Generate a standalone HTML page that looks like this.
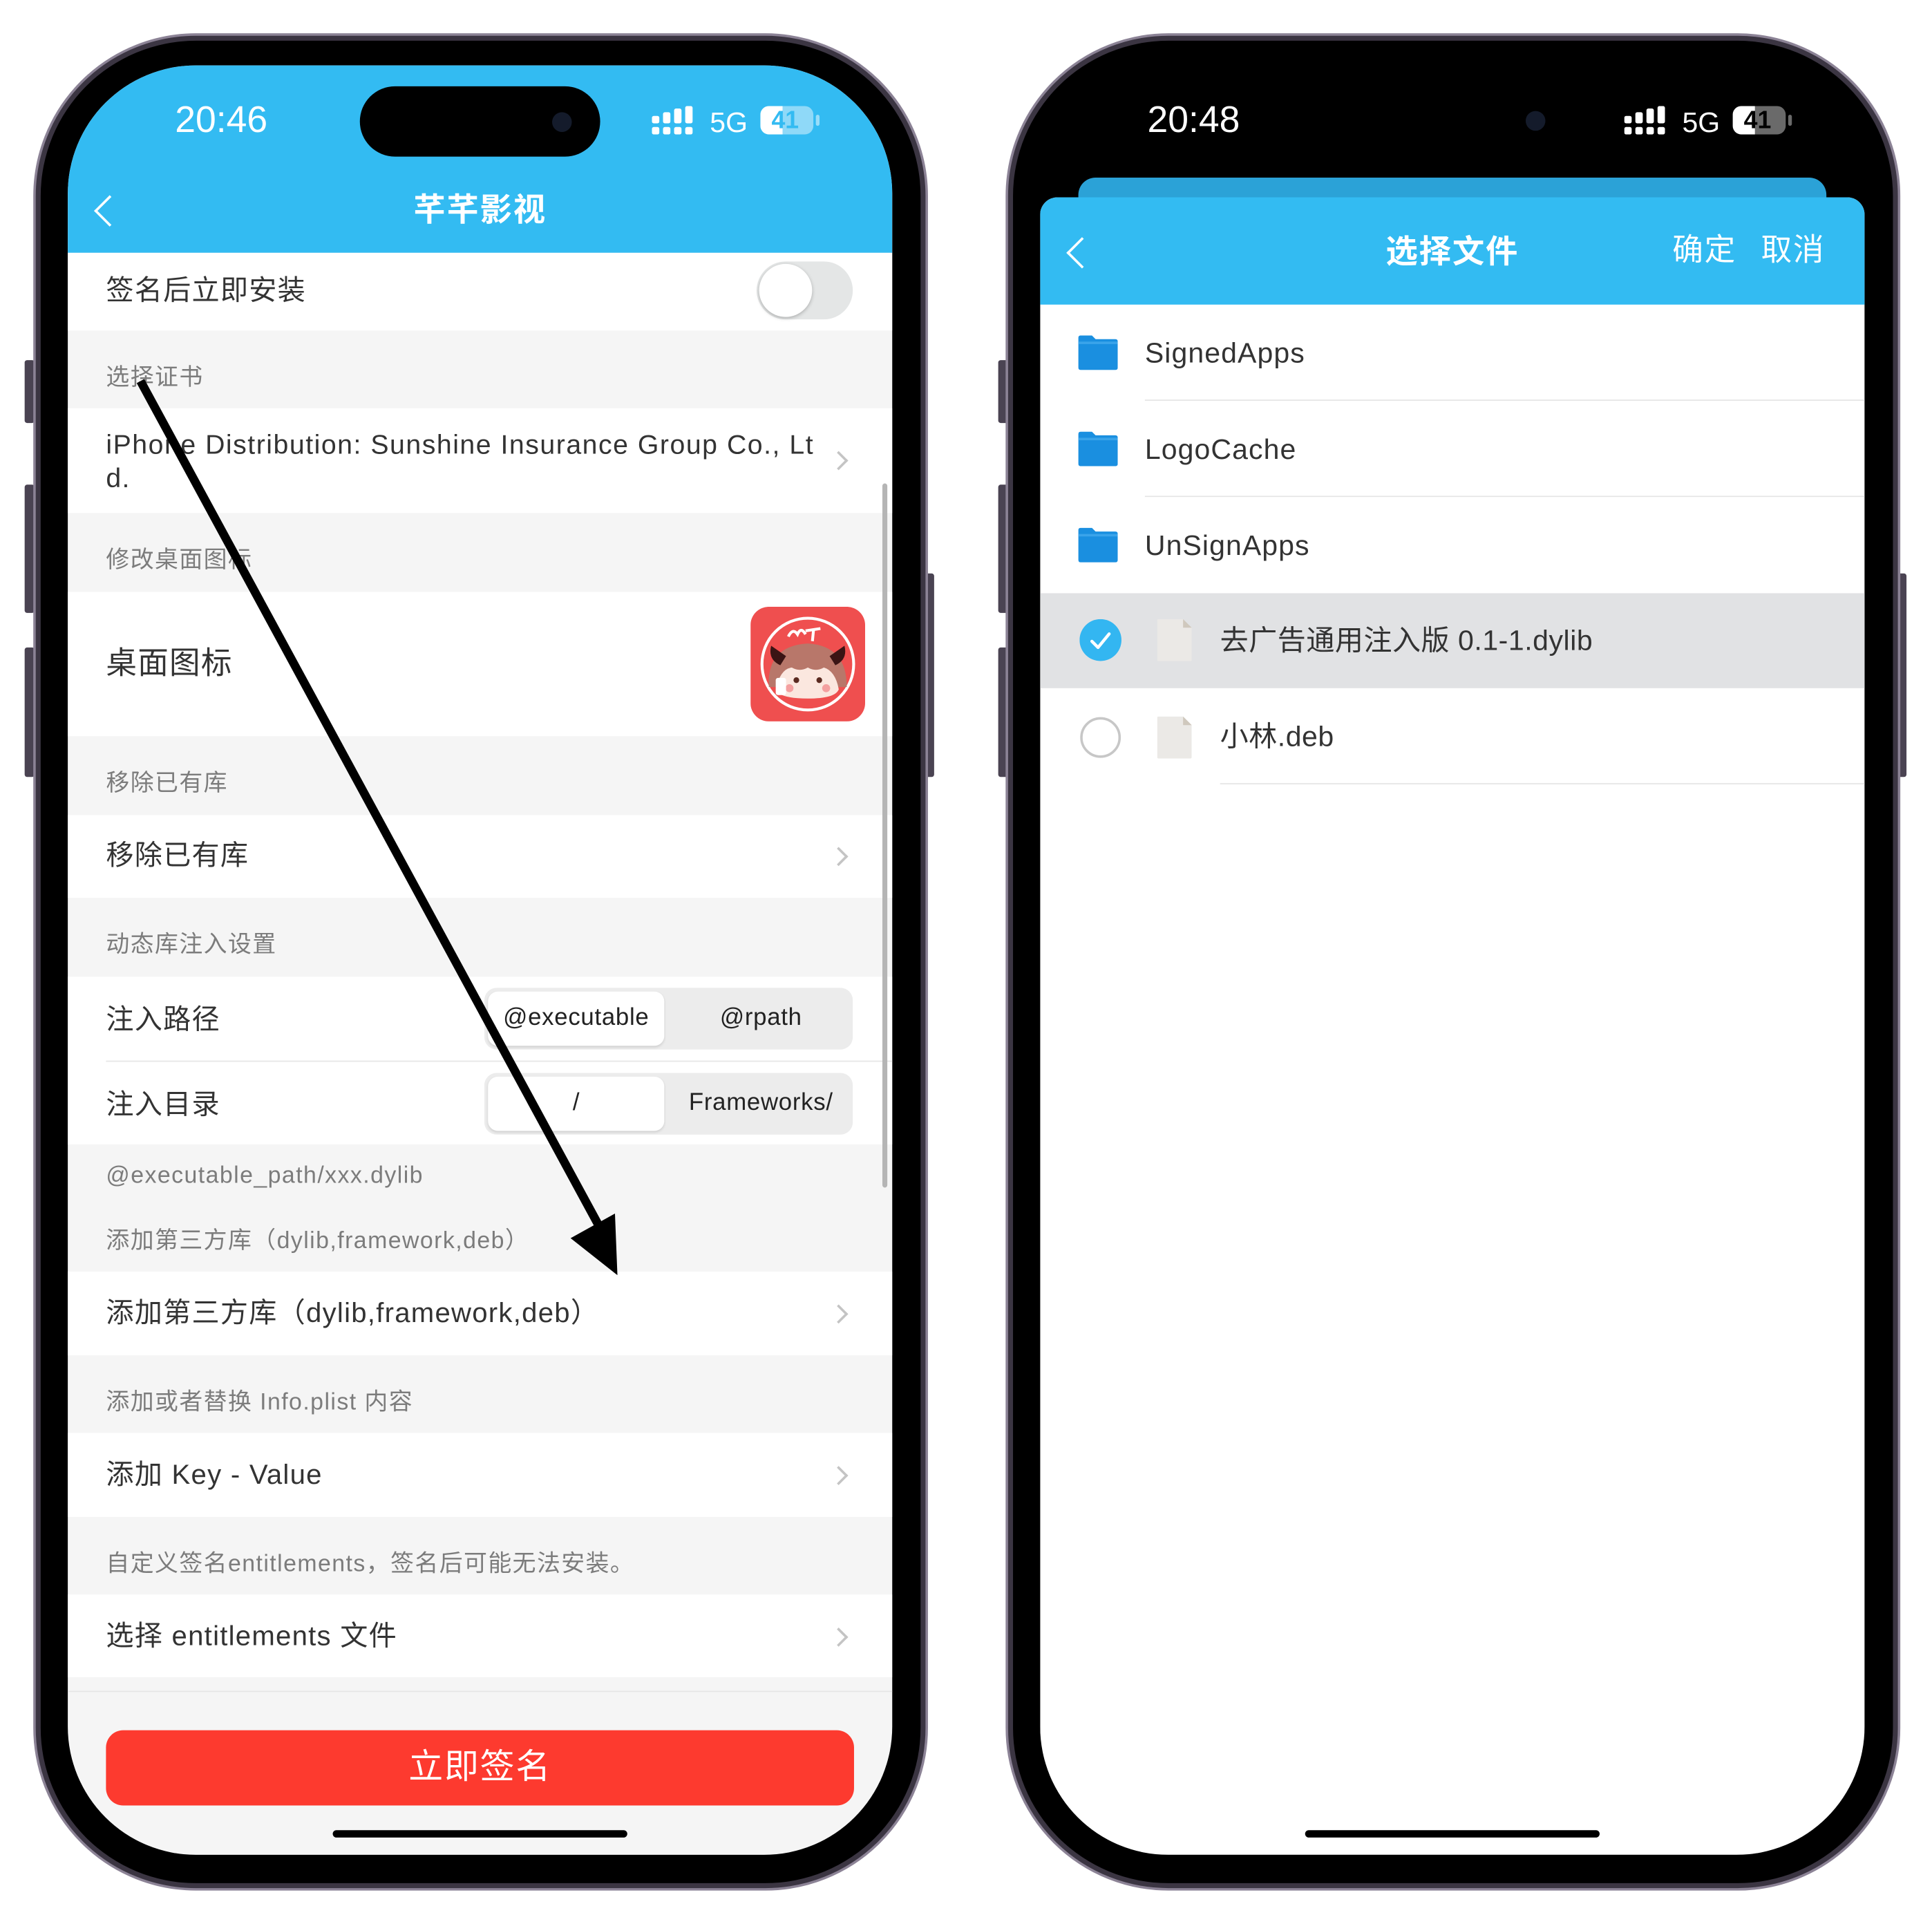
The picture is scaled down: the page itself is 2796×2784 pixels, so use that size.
<!DOCTYPE html>
<html><head><meta charset="utf-8"><style>
*{margin:0;padding:0;box-sizing:border-box}
html,body{width:2796px;height:2777px;overflow:hidden;background:#fff}
#w{position:absolute;left:0;top:0;width:1570px;height:1560px;transform:scale(1.7835,1.7845);transform-origin:0 0;font-family:"Liberation Sans","Noto Sans CJK SC",sans-serif}
.a{position:absolute}
.frame{position:absolute;border-radius:132px;background:#3b3542;border:2px solid #8c8396}
.bez{position:absolute;left:4px;top:4px;right:4px;bottom:4px;border-radius:126px;background:#000}
.scr{position:absolute;overflow:hidden;border-radius:104px;background:#f5f5f5}
.btn{position:absolute;background:#4a4352;border-radius:2px}
.t{position:absolute;white-space:nowrap;line-height:1}
.row{position:absolute;left:0;width:669px;background:#fff}
.lbl{position:absolute;left:31px;font-size:22.5px;letter-spacing:.7px;color:#333;white-space:nowrap;line-height:1}
.sm{position:absolute;left:31px;font-size:19px;letter-spacing:.8px;color:#7c7c7c;white-space:nowrap;line-height:1}
.chev{position:absolute;left:620px;width:11px;height:11px;border-right:2px solid #c4c4c4;border-top:2px solid #c4c4c4;transform:rotate(45deg)}
.sep{position:absolute;height:1px;background:#e6e6e6}
</style></head><body><div id="w">

<!-- LEFT PHONE -->
<div class="btn" style="left:20px;top:292px;width:8px;height:51px"></div>
<div class="btn" style="left:20px;top:393px;width:8px;height:104px"></div>
<div class="btn" style="left:20px;top:525px;width:8px;height:105px"></div>
<div class="btn" style="left:751px;top:465px;width:7px;height:165px"></div>
<div class="frame" style="left:27px;top:27px;width:726px;height:1506px"><div class="bez"></div></div>
<div class="scr" style="left:55px;top:53px;width:669px;height:1451px">
  <div class="a" style="left:0;top:0;width:669px;height:152px;background:#33bbf2"></div>
  <div class="t" style="left:87px;top:30px;font-size:30px;color:#fff;font-weight:500">20:46</div>
  <div class="a" style="left:237px;top:17px;width:195px;height:57px;border-radius:29px;background:#000"></div>
  <div class="a" style="left:393px;top:38px;width:16px;height:16px;border-radius:8px;background:#141b2b"></div>
  <svg class="a" style="left:474px;top:33px" width="36" height="24" viewBox="0 0 36 24"><g fill="#fff"><rect x="0" y="8" width="6" height="6" rx="1.5"/><rect x="0" y="17" width="6" height="6" rx="1.5"/><rect x="9" y="5" width="6" height="9" rx="1.5"/><rect x="9" y="17" width="6" height="6" rx="1.5"/><rect x="18" y="2" width="6" height="12" rx="1.5"/><rect x="18" y="17" width="6" height="6" rx="1.5"/><rect x="27" y="0" width="6" height="14" rx="1.5"/><rect x="27" y="17" width="6" height="6" rx="1.5"/></g></svg>
  <div class="t" style="left:521px;top:35px;font-size:23px;color:#fff">5G</div>
  <div class="a" style="left:562px;top:33px;width:43px;height:23px;border-radius:7px;background:rgba(255,255,255,.45);overflow:hidden"><div class="a" style="left:0;top:0;width:18px;height:23px;background:#fff"></div><div class="t" style="left:9px;top:2px;font-size:20px;font-weight:bold;color:#33bbf2">41</div></div>
  <div class="a" style="left:607px;top:40px;width:3px;height:9px;border-radius:2px;background:rgba(255,255,255,.5)"></div>
  <div class="a" style="left:25px;top:109px;width:18px;height:18px;border-left:2.5px solid #fff;border-bottom:2.5px solid #fff;transform:rotate(45deg)"></div>
  <div class="t" style="left:0;width:669px;text-align:center;top:104px;font-size:26px;font-weight:bold;color:#fff;letter-spacing:1px">芊芊影视</div>

  <div class="row" style="top:152px;height:63px"><div class="lbl" style="top:20px">签名后立即安装</div>
    <div class="a" style="left:559px;top:7px;width:78px;height:47px;border-radius:24px;background:#e4e6e6"></div>
    <div class="a" style="left:561px;top:9px;width:43px;height:43px;border-radius:22px;background:#fff;box-shadow:0 1px 3px rgba(0,0,0,.25)"></div></div>
  <div class="sm" style="top:244px">选择证书</div>
  <div class="row" style="top:278px;height:85px"><div class="lbl" style="top:19px;font-size:22px;letter-spacing:.85px">iPhone Distribution: Sunshine Insurance Group Co., Lt</div><div class="lbl" style="top:46px;font-size:22px">d.</div><div class="chev" style="top:37px"></div></div>
  <div class="sm" style="top:392px">修改桌面图标</div>
  <div class="row" style="top:427px;height:117px"><div class="lbl" style="top:46px;font-size:25px">桌面图标</div>
    <svg class="a" style="left:554px;top:12px" width="93" height="93" viewBox="0 0 100 100">
      <rect width="100" height="100" rx="16" fill="#ef4f4f"/>
      <circle cx="50" cy="50" r="40" fill="none" stroke="#fff" stroke-width="2.5"/>
      <path d="M33 26 q4-8 8 -2 q3 -7 7 0 M48 21 l13 -2 M55 20 l-1 10" stroke="#fff" stroke-width="2.5" fill="none"/>
      <path d="M16 70 q-2-36 34-38 q34 2 34 38 z" fill="#b8776a"/>
      <path d="M18 34 q-3 12 8 17 l5 -8 z M82 34 q3 12 -8 17 l-5 -8 z" fill="#3a1414"/>
      <path d="M22 72 q4-18 14-19 q7 4 14 0 q7 4 14 0 q10 3 13 19 q-3 8 -27 8 q-25 0 -28 -8z" fill="#fbe7df"/>
      <circle cx="40" cy="64" r="2.5" fill="#5a2a20"/><circle cx="60" cy="64" r="2.5" fill="#5a2a20"/>
      <circle cx="34" cy="71" r="3.5" fill="#f4a0a0"/><circle cx="66" cy="71" r="3.5" fill="#f4a0a0"/>
      <rect x="22" y="62" width="9" height="15" rx="2" fill="#fff"/>
    </svg></div>
  <div class="sm" style="top:573px">移除已有库</div>
  <div class="row" style="top:608px;height:67px"><div class="lbl" style="top:22px">移除已有库</div><div class="chev" style="top:28px"></div></div>
  <div class="sm" style="top:704px">动态库注入设置</div>
  <div class="row" style="top:739px;height:136px">
    <div class="lbl" style="top:24px">注入路径</div>
    <div class="sep" style="left:31px;top:68px;width:638px"></div>
    <div class="lbl" style="top:93px">注入目录</div>
    <div class="a" style="left:338px;top:9px;width:299px;height:50px;border-radius:10px;background:#ececec"></div>
    <div class="a" style="left:341px;top:12px;width:143px;height:44px;border-radius:8px;background:#fff;box-shadow:0 1px 2px rgba(0,0,0,.12)"></div>
    <div class="t" style="left:341px;width:143px;text-align:center;top:24px;font-size:19.5px;letter-spacing:.4px;color:#222">@executable</div>
    <div class="t" style="left:488px;width:149px;text-align:center;top:24px;font-size:19.5px;letter-spacing:.4px;color:#222">@rpath</div>
    <div class="a" style="left:338px;top:78px;width:299px;height:50px;border-radius:10px;background:#ececec"></div>
    <div class="a" style="left:341px;top:81px;width:143px;height:44px;border-radius:8px;background:#fff;box-shadow:0 1px 2px rgba(0,0,0,.12)"></div>
    <div class="t" style="left:341px;width:143px;text-align:center;top:93px;font-size:19.5px;color:#222">/</div>
    <div class="t" style="left:488px;width:149px;text-align:center;top:93px;font-size:19.5px;letter-spacing:.4px;color:#222">Frameworks/</div>
  </div>
  <div class="sm" style="top:891px">@executable_path/xxx.dylib</div>
  <div class="sm" style="top:944px">添加第三方库（dylib,framework,deb）</div>
  <div class="row" style="top:978px;height:68px"><div class="lbl" style="top:23px">添加第三方库（dylib,framework,deb）</div><div class="chev" style="top:29px"></div></div>
  <div class="sm" style="top:1075px">添加或者替换 Info.plist 内容</div>
  <div class="row" style="top:1109px;height:68px"><div class="lbl" style="top:23px">添加 Key - Value</div><div class="chev" style="top:29px"></div></div>
  <div class="sm" style="top:1206px">自定义签名entitlements，签名后可能无法安装。</div>
  <div class="row" style="top:1240px;height:67px"><div class="lbl" style="top:23px">选择 entitlements 文件</div><div class="chev" style="top:29px"></div></div>
  <div class="sep" style="left:0;top:1318px;width:669px"></div>
  <div class="a" style="left:31px;top:1350px;width:607px;height:61px;border-radius:14px;background:#fd3a2f"></div>
  <div class="t" style="left:31px;width:607px;text-align:center;top:1366px;font-size:28px;color:#fff;letter-spacing:1px">立即签名</div>
  <div class="a" style="left:661px;top:339px;width:4px;height:571px;border-radius:2px;background:#b5b5b5"></div>
  <div class="a" style="left:215px;top:1431px;width:239px;height:6px;border-radius:3px;background:#000"></div>
</div>
<svg class="a" style="left:0;top:0" width="760" height="1100"><line x1="114" y1="309" x2="486" y2="994" stroke="#000" stroke-width="7"/><polygon points="463,1004 499,984 501,1034" fill="#000"/></svg>

<!-- RIGHT PHONE -->
<div class="btn" style="left:810px;top:292px;width:8px;height:51px"></div>
<div class="btn" style="left:810px;top:393px;width:8px;height:104px"></div>
<div class="btn" style="left:810px;top:525px;width:8px;height:105px"></div>
<div class="btn" style="left:1540px;top:465px;width:7px;height:165px"></div>
<div class="frame" style="left:816px;top:27px;width:726px;height:1506px"><div class="bez"></div></div>
<div class="scr" style="left:844px;top:53px;width:669px;height:1451px;background:#000">
  <div class="t" style="left:87px;top:30px;font-size:30px;color:#fff;font-weight:500">20:48</div>
  <div class="a" style="left:394px;top:37px;width:16px;height:16px;border-radius:8px;background:#141b2b"></div>
  <svg class="a" style="left:474px;top:33px" width="36" height="24" viewBox="0 0 36 24"><g fill="#fff"><rect x="0" y="8" width="6" height="6" rx="1.5"/><rect x="0" y="17" width="6" height="6" rx="1.5"/><rect x="9" y="5" width="6" height="9" rx="1.5"/><rect x="9" y="17" width="6" height="6" rx="1.5"/><rect x="18" y="2" width="6" height="12" rx="1.5"/><rect x="18" y="17" width="6" height="6" rx="1.5"/><rect x="27" y="0" width="6" height="14" rx="1.5"/><rect x="27" y="17" width="6" height="6" rx="1.5"/></g></svg>
  <div class="t" style="left:521px;top:35px;font-size:23px;color:#fff">5G</div>
  <div class="a" style="left:562px;top:33px;width:43px;height:23px;border-radius:7px;background:#6a6a6a;overflow:hidden"><div class="a" style="left:0;top:0;width:18px;height:23px;background:#fff"></div><div class="t" style="left:9px;top:2px;font-size:20px;font-weight:bold;color:#000">41</div></div>
  <div class="a" style="left:607px;top:40px;width:3px;height:9px;border-radius:2px;background:#6a6a6a"></div>
  <div class="a" style="left:31px;top:91px;width:607px;height:40px;border-radius:14px 14px 0 0;background:#2ba2d7"></div>
  <div class="a" style="left:0;top:107px;width:669px;height:1344px;border-radius:14px 14px 0 0;background:#fff"></div>
  <div class="a" style="left:0;top:107px;width:669px;height:87px;border-radius:14px 14px 0 0;background:#33bbf2"></div>
  <div class="a" style="left:25px;top:143px;width:18px;height:18px;border-left:2.5px solid #fff;border-bottom:2.5px solid #fff;transform:rotate(45deg)"></div>
  <div class="t" style="left:0;width:669px;text-align:center;top:138px;font-size:26px;font-weight:bold;color:#fff;letter-spacing:1px">选择文件</div>
  <div class="t" style="left:513px;top:138px;font-size:25px;color:#fff;letter-spacing:1px">确定</div>
  <div class="t" style="left:585px;top:138px;font-size:25px;color:#fff;letter-spacing:1px">取消</div>
  <div class="a" style="left:0;top:428px;width:669px;height:77px;background:#e1e2e4"></div>
  <div class="sep" style="left:85px;top:271px;width:584px"></div>
  <div class="sep" style="left:85px;top:349px;width:584px"></div>
  <div class="sep" style="left:146px;top:582px;width:523px"></div>
  <svg class="a" style="left:31px;top:219px" width="32" height="28" viewBox="0 0 32 28"><path d="M0 2 q0-2 2-2 h9 l3 3 h16 q2 0 2 2 v21 q0 2-2 2 h-28 q-2 0-2-2z" fill="#1a8fe0"/><rect x="0" y="5" width="32" height="2" fill="#3aa4ea"/></svg>
  <div class="t" style="left:85px;top:222px;font-size:23px;letter-spacing:.6px;color:#333">SignedApps</div>
  <svg class="a" style="left:31px;top:297px" width="32" height="28" viewBox="0 0 32 28"><path d="M0 2 q0-2 2-2 h9 l3 3 h16 q2 0 2 2 v21 q0 2-2 2 h-28 q-2 0-2-2z" fill="#1a8fe0"/><rect x="0" y="5" width="32" height="2" fill="#3aa4ea"/></svg>
  <div class="t" style="left:85px;top:300px;font-size:23px;letter-spacing:.6px;color:#333">LogoCache</div>
  <svg class="a" style="left:31px;top:375px" width="32" height="28" viewBox="0 0 32 28"><path d="M0 2 q0-2 2-2 h9 l3 3 h16 q2 0 2 2 v21 q0 2-2 2 h-28 q-2 0-2-2z" fill="#1a8fe0"/><rect x="0" y="5" width="32" height="2" fill="#3aa4ea"/></svg>
  <div class="t" style="left:85px;top:378px;font-size:23px;letter-spacing:.6px;color:#333">UnSignApps</div>
  <svg class="a" style="left:32px;top:449px" width="34" height="34" viewBox="0 0 34 34"><circle cx="17" cy="17" r="17" fill="#33b6f1"/><path d="M10 18 l5 5 l9-11" stroke="#fff" stroke-width="2.5" fill="none" stroke-linecap="round" stroke-linejoin="round"/></svg>
  <svg class="a" style="left:95px;top:449px" width="28" height="34" viewBox="0 0 28 34"><path d="M0 1 q0-1 1-1 h20 l7 7 v26 q0 1-1 1 h-26 q-1 0-1-1z" fill="#ebe9e6"/><path d="M21 0 l7 7 h-7z" fill="#cfc8bd"/></svg>
  <div class="t" style="left:146px;top:455px;font-size:23px;letter-spacing:.3px;color:#333">去广告通用注入版 0.1-1.dylib</div>
  <svg class="a" style="left:32px;top:528px" width="34" height="34" viewBox="0 0 34 34"><circle cx="17" cy="17" r="15.5" fill="none" stroke="#c7c7c7" stroke-width="2"/></svg>
  <svg class="a" style="left:95px;top:528px" width="28" height="34" viewBox="0 0 28 34"><path d="M0 1 q0-1 1-1 h20 l7 7 v26 q0 1-1 1 h-26 q-1 0-1-1z" fill="#ebe9e6"/><path d="M21 0 l7 7 h-7z" fill="#cfc8bd"/></svg>
  <div class="t" style="left:146px;top:533px;font-size:23px;letter-spacing:.3px;color:#333">小林.deb</div>
  <div class="a" style="left:215px;top:1431px;width:239px;height:6px;border-radius:3px;background:#000"></div>
</div>
</div></body></html>
